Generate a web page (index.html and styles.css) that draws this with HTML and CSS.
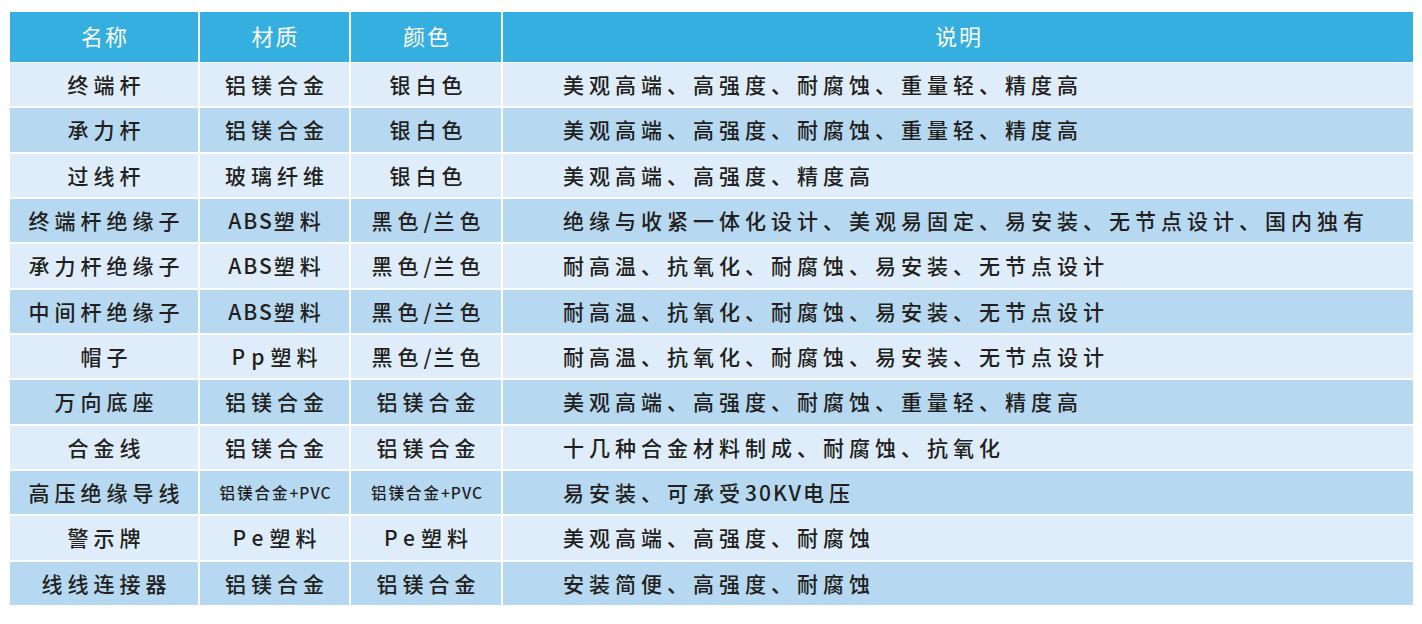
FILE: index.html
```html
<!DOCTYPE html>
<html lang="zh-CN">
<head>
<meta charset="utf-8">
<title>产品材质说明</title>
<link rel="stylesheet" href="styles.css">
</head>
<body>
<div class="sheet">
  <div class="grid">
    <div class="cell head">名称</div>
    <div class="cell head">材质</div>
    <div class="cell head">颜色</div>
    <div class="cell head">说明</div>

    <div class="cell light">终端杆</div>
    <div class="cell light">铝镁合金</div>
    <div class="cell light">银白色</div>
    <div class="cell light desc">美观高端、高强度、耐腐蚀、重量轻、精度高</div>

    <div class="cell dark">承力杆</div>
    <div class="cell dark">铝镁合金</div>
    <div class="cell dark">银白色</div>
    <div class="cell dark desc">美观高端、高强度、耐腐蚀、重量轻、精度高</div>

    <div class="cell light">过线杆</div>
    <div class="cell light">玻璃纤维</div>
    <div class="cell light">银白色</div>
    <div class="cell light desc">美观高端、高强度、精度高</div>

    <div class="cell dark">终端杆绝缘子</div>
    <div class="cell dark"><span class="lat">ABS</span>塑料</div>
    <div class="cell dark">黑色<span class="lat">/</span>兰色</div>
    <div class="cell dark desc">绝缘与收紧一体化设计、美观易固定、易安装、无节点设计、国内独有</div>

    <div class="cell light">承力杆绝缘子</div>
    <div class="cell light"><span class="lat">ABS</span>塑料</div>
    <div class="cell light">黑色<span class="lat">/</span>兰色</div>
    <div class="cell light desc">耐高温、抗氧化、耐腐蚀、易安装、无节点设计</div>

    <div class="cell dark">中间杆绝缘子</div>
    <div class="cell dark"><span class="lat">ABS</span>塑料</div>
    <div class="cell dark">黑色<span class="lat">/</span>兰色</div>
    <div class="cell dark desc">耐高温、抗氧化、耐腐蚀、易安装、无节点设计</div>

    <div class="cell light">帽子</div>
    <div class="cell light"><span class="lat wide">Pp</span>塑料</div>
    <div class="cell light">黑色<span class="lat">/</span>兰色</div>
    <div class="cell light desc">耐高温、抗氧化、耐腐蚀、易安装、无节点设计</div>

    <div class="cell dark">万向底座</div>
    <div class="cell dark">铝镁合金</div>
    <div class="cell dark">铝镁合金</div>
    <div class="cell dark desc">美观高端、高强度、耐腐蚀、重量轻、精度高</div>

    <div class="cell light">合金线</div>
    <div class="cell light">铝镁合金</div>
    <div class="cell light">铝镁合金</div>
    <div class="cell light desc">十几种合金材料制成、耐腐蚀、抗氧化</div>

    <div class="cell dark">高压绝缘导线</div>
    <div class="cell dark small">铝镁合金<span class="lat">+PVC</span></div>
    <div class="cell dark small">铝镁合金<span class="lat">+PVC</span></div>
    <div class="cell dark desc">易安装、可承受<span class="lat">30KV</span>电压</div>

    <div class="cell light">警示牌</div>
    <div class="cell light"><span class="lat wide">Pe</span>塑料</div>
    <div class="cell light"><span class="lat wide">Pe</span>塑料</div>
    <div class="cell light desc">美观高端、高强度、耐腐蚀</div>

    <div class="cell dark">线线连接器</div>
    <div class="cell dark">铝镁合金</div>
    <div class="cell dark">铝镁合金</div>
    <div class="cell dark desc">安装简便、高强度、耐腐蚀</div>
  </div>
</div>
</body>
</html>
```

FILE: styles.css
```css
html, body {
  margin: 0;
  padding: 0;
  background: #ffffff;
}

body {
  font-family: "Noto Sans CJK SC", "Noto Sans", sans-serif;
  color: #231f20;
}

.sheet {
  padding: 12px 0 0 10px;
}

.grid {
  display: grid;
  width: 1403px;
  grid-template-columns: 188px 149px 150px 910px;
  grid-template-rows: 49px repeat(12, 43.33px);
  column-gap: 2px;
  row-gap: 2px;
  background: #ffffff;
}

.cell {
  display: flex;
  align-items: center;
  justify-content: center;
  font-size: 21px;
  font-weight: 500;
  letter-spacing: 5px;
  padding-left: 5px;
  white-space: nowrap;
  line-height: 1;
}

.lat {
  letter-spacing: 2px;
}

.lat.wide {
  letter-spacing: 6px;
}

.head {
  background: #35aee0;
  color: #ffffff;
  font-size: 22px;
  font-weight: 400;
  letter-spacing: 2px;
  padding-left: 2px;
  padding-bottom: 5px;
  margin-bottom: -1px;
}

.light {
  background: #deedf9;
}

.dark {
  background: #b6d8f0;
}

.desc {
  justify-content: flex-start;
  padding-left: 60px;
}

.small {
  font-size: 15.5px;
  letter-spacing: 2px;
  padding-left: 2px;
}

.small .lat {
  letter-spacing: 1px;
}
```
